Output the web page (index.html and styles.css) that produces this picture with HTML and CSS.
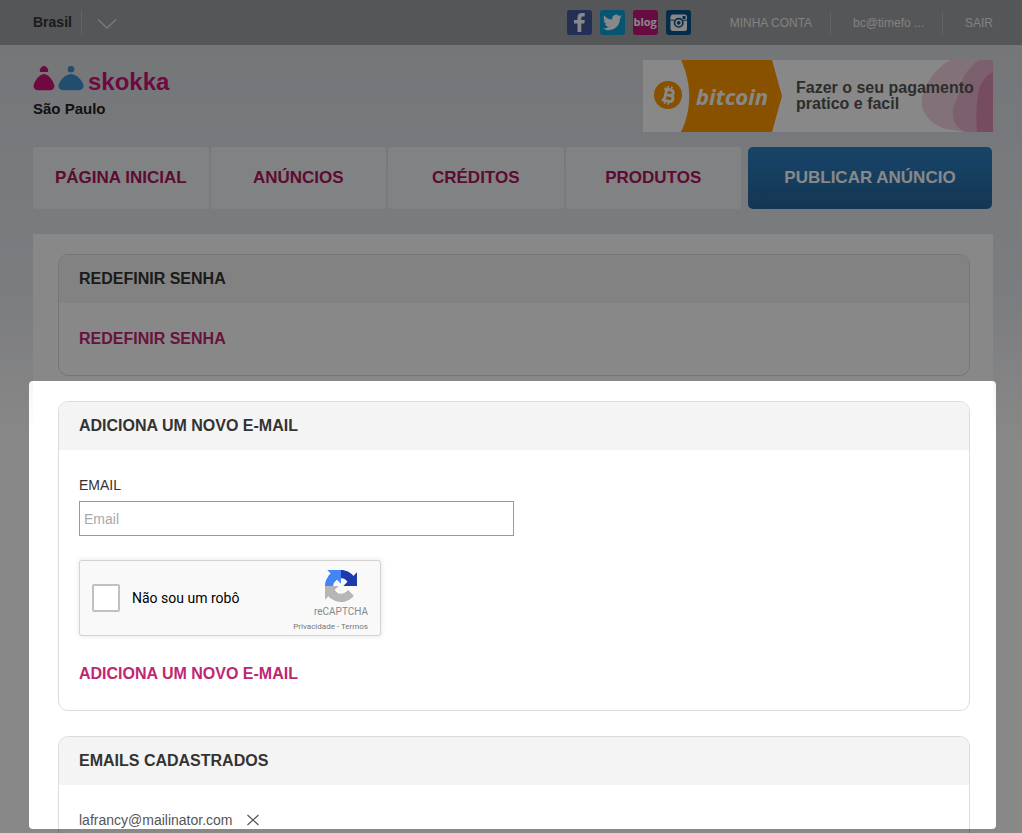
FILE: index.html
```html
<!DOCTYPE html>
<html lang="pt-BR">
<head>
<meta charset="utf-8">
<meta name="viewport" content="width=device-width, initial-scale=1">
<title>Skokka São Paulo</title>
<link rel="stylesheet" href="styles.css">
</head>
<body>
<div class="page">
  <header class="topbar">
    <div class="country">
      <span class="country-name">Brasil</span>
      <button class="country-toggle" type="button" aria-label="Escolher país">
        <svg width="20" height="12" viewBox="0 0 20 12"><path d="M1 1.500 10 10 19 1.500" fill="none" stroke="#e4e4e4" stroke-width="1.500"/></svg>
      </button>
    </div>
    <nav class="social" aria-label="Redes sociais">
      <a href="#" aria-label="Facebook"><svg width="25" height="25" viewBox="0 0 25 25"><rect width="25" height="25" rx="3" fill="#42599f"/><path d="M10.500 22v-8.500H7V10h3.500V7.500C10.500 4.400 12.200 3 15 3h2.700v3.500h-1.800c-1.300 0-1.600.5-1.600 1.600V10h3.500l-.5 3.500h-3V22z" fill="#fff"/></svg></a>
      <a href="#" aria-label="Twitter"><svg width="25" height="25" viewBox="0 0 25 25"><rect width="25" height="25" rx="3" fill="#0b9fd8"/><path d="M22 6.600c-.7.300-1.400.5-2.200.6.800-.5 1.400-1.200 1.700-2.100-.8.400-1.600.8-2.500.9a3.900 3.900 0 0 0-6.700 3.600C9 9.400 6.200 7.800 4.200 5.400c-1 1.800-.5 4.100 1.200 5.200-.6 0-1.200-.2-1.700-.5 0 1.900 1.300 3.500 3.100 3.900-.6.200-1.200.2-1.800.1.500 1.500 2 2.600 3.700 2.700A7.900 7.900 0 0 1 3 18.400c7.500 4.700 17-.6 17-9.800.8-.5 1.500-1.200 2-2z" fill="#fff"/></svg></a>
      <a class="blog" href="#">blog</a>
      <a href="#" aria-label="Instagram"><svg width="25" height="25" viewBox="0 0 25 25"><rect width="25" height="25" rx="3" fill="#0a5387"/><rect x="4.500" y="4.500" width="16.500" height="16.500" rx="2.500" fill="#fff"/><path d="M4.500 10.200h3.800M16.800 10.200H21" stroke="#0a5387"/><circle cx="12.700" cy="12.800" r="4.200" fill="#fff" stroke="#0a5387" stroke-width="1.600"/><circle cx="12.700" cy="12.800" r="1.900" fill="#0a5387"/><rect x="16.500" y="6" width="3" height="3" rx=".6" fill="#0a5387"/></svg></a>
    </nav>
    <nav class="account" aria-label="Conta">
      <a href="#">MINHA CONTA</a>
      <a href="#">bc@timefo ...</a>
      <a href="#">SAIR</a>
    </nav>
  </header>

  <div class="content">
    <div class="masthead">
      <div class="brand">
        <a class="logo" href="#">
          <svg width="51" height="26" viewBox="0 0 51 26" aria-hidden="true"><path d="M7 7C6 4.500 8.500 1 11 1s5 3.500 4 6zM11 9C6 9.500 2 15.500.7 20c-.8 3 1.200 5.200 4.500 5.200h11.600c3.300 0 5.300-2.200 4.500-5.200C20 15.500 16 9.500 11 9z" fill="#d3127b"/><circle cx="38" cy="4.200" r="3.300" fill="#3e92d0"/><path d="M38 9c-6 .6-10.500 5.700-12.300 10.500-1 3 .8 5.700 4.300 5.700h16c3.500 0 5.300-2.700 4.300-5.700C48.500 14.700 44 9.600 38 9z" fill="#3e92d0"/></svg>
          <span>skokka</span>
        </a>
        <p class="city">São Paulo</p>
      </div>
      <a class="banner" href="#">
        <svg width="350" height="72" viewBox="0 0 350 72">
          <rect width="350" height="72" fill="#fff"/>
          <path d="M308 0c-14 6-27 25-29 38-2 14 8 26 24 31l20 3h27V0z" fill="#f3d4e3"/>
          <path d="M336 0c-11 8-18 18-19 30-2 9-8 15-7 24 0 9 5 16 14 18h26V0z" fill="#e9b5cf"/>
          <path d="M350 12c-8 4-14 13-15 22-2 13-2 27-1 38h16z" fill="#de8fb7"/>
          <path d="M38 0h91l10 36-10 36H38c11-23 11-48 0-72z" fill="#ff9800"/>
          <circle cx="25" cy="35" r="14" fill="#ff9800"/>
          <g transform="rotate(13 25 35)" fill="none" stroke="#fff" stroke-width="2.800"><path d="M20 29.500h6.500c4.300 0 4.300 5.500 0 5.500H22h5c5 0 5 6 0 6h-7M22.500 29v12"/><path d="M23.500 26v3.500M27 26v3.500M23.500 41v3.500M27 41v3.500" stroke-width="1.700"/></g>
          <text class="bitcoin" x="53" y="45">bitcoin</text>
          <text class="slogan" x="153" y="33">Fazer o seu pagamento</text>
          <text class="slogan" x="153" y="49">pratico e facil</text>
        </svg>
      </a>
    </div>

    <nav class="menu" aria-label="Principal">
      <div class="tabs">
        <a href="#">PÁGINA INICIAL</a>
        <a href="#">ANÚNCIOS</a>
        <a href="#">CRÉDITOS</a>
        <a href="#">PRODUTOS</a>
      </div>
      <a class="publish" href="#">PUBLICAR ANÚNCIO</a>
    </nav>

    <main class="panel">
      <section class="card">
        <h2>REDEFINIR SENHA</h2>
        <div class="card-body"><a class="action" href="#">REDEFINIR SENHA</a></div>
      </section>
      <div class="highlight">
        <section class="card">
          <h2>ADICIONA UM NOVO E-MAIL</h2>
          <form class="card-body">
            <label class="field-label" for="email">EMAIL</label>
            <input class="field" id="email" type="email" placeholder="Email">
            <div class="captcha">
              <input id="robot" type="checkbox">
              <label for="robot">Não sou um robô</label>
              <div class="captcha-brand">
                <svg width="32" height="32" viewBox="0 0 64 64" aria-hidden="true"><path d="M64 31.955c-.002-.46-.012-.918-.033-1.373V4.687l-7.160 7.160C50.948 4.670 42.009.085 32.002.085c-10.414 0-19.666 4.966-25.505 12.655l11.736 11.860a15.550 15.550 0 0 1 4.754-5.336c2.050-1.600 4.953-2.908 8.996-2.908.488 0 .865.057 1.142.165 5.010.395 9.350 3.160 11.907 7.173l-8.307 8.307z" fill="#1c3aa9"/><path d="M31.862.094c-.459.002-.916.013-1.370.034H4.594l7.160 7.160C4.577 13.146 0 22.085 0 32.092c0 10.414 4.966 19.666 12.655 25.505l11.860-11.736a15.550 15.550 0 0 1-5.336-4.754c-1.600-2.050-2.908-4.953-2.908-8.996 0-.488.057-.865.165-1.142.395-5.010 3.160-9.350 7.173-11.907l8.307 8.307z" fill="#4285f4"/><path d="M.001 32.040c.002.459.013.916.034 1.370v25.898l7.160-7.160c5.868 7.176 14.800 11.760 24.807 11.760 10.414 0 19.666-4.966 25.505-12.655L45.771 39.393a15.550 15.550 0 0 1-4.754 5.336c-2.050 1.600-4.953 2.908-8.996 2.908-.488 0-.865-.057-1.142-.165-5.010-.395-9.350-3.160-11.907-7.173l8.307-8.307z" fill="#b6b6b6"/></svg>
                <span class="captcha-name">reCAPTCHA</span>
                <span class="captcha-links"><a href="#">Privacidade</a> - <a href="#">Termos</a></span>
              </div>
            </div>
            <button class="action" type="submit">ADICIONA UM NOVO E-MAIL</button>
          </form>
        </section>
        <section class="card">
          <h2>EMAILS CADASTRADOS</h2>
          <div class="card-body registered">
            <span>lafrancy@mailinator.com</span>
            <button type="button" aria-label="Remover"><svg width="12" height="12" viewBox="0 0 12 12"><path d="M.5 1 11.500 11M11.500 1 .5 11" stroke="#555" stroke-width="1.200"/></svg></button>
          </div>
        </section>
      </div>
    </main>
  </div>
</div>
</body>
</html>
```

FILE: styles.css
```css
* { box-sizing: border-box; }

body {
  margin: 0;
  font: 14px/20px "Liberation Sans", Arial, sans-serif;
  color: #333;
}

a { color: inherit; text-decoration: none; }

button {
  margin: 0;
  padding: 0;
  border: 0;
  background: none;
  font: inherit;
  cursor: pointer;
}

svg { display: block; }

h2, p { margin: 0; }

.page {
  height: 100vh;
  overflow: hidden;
  background: linear-gradient(#dadce0, #e8eaef 300px, #fff 440px);
}

.topbar {
  display: flex;
  align-items: center;
  height: 45px;
  padding: 0 29px 0 33px;
  background: #9fa1a3;
}

.country { display: flex; align-items: center; }

.country-name {
  padding-right: 9px;
  border-right: 1px solid #b6b8ba;
  font-weight: bold;
  line-height: 25px;
}

.country-toggle { padding: 2px 15px 0; }

.social { display: flex; gap: 8px; margin-left: auto; }

.blog {
  width: 25px;
  height: 25px;
  border-radius: 3px;
  background: #c4157c;
  color: #fff;
  font: bold 11px/23px "Open Sans", sans-serif;
  text-align: center;
}

.account {
  display: flex;
  margin-left: 22px;
  color: #f2f2f2;
  font-size: 12px;
  line-height: 24px;
}

.account a { padding: 0 18px 0 17px; }
.account a + a { padding-left: 22px; border-left: 1px solid #b6b8ba; }
.account a:last-child { padding-right: 0; }

.content { padding: 0 29px 0 33px; }

.masthead {
  display: flex;
  justify-content: space-between;
  padding-top: 15px;
}

.brand { padding-top: 5px; }

.logo {
  display: flex;
  gap: 4px;
  height: 34px;
  color: #cc1478;
  font-size: 24px;
  font-weight: bold;
  line-height: 34px;
}

.city { font-size: 15px; font-weight: bold; color: #222; }

.bitcoin { font: italic bold 22px "Open Sans", sans-serif; fill: #fff; }
.slogan { font: bold 16px "Liberation Sans", Arial, sans-serif; fill: #555; }

.menu {
  display: flex;
  gap: 7px;
  margin-top: 15px;
  padding-right: 1px;
  font-size: 17px;
  font-weight: bold;
  line-height: 62px;
  text-align: center;
}

.tabs {
  display: grid;
  grid-template-columns: repeat(4, 1fr);
  gap: 2px;
  flex: 1;
  color: #b0135f;
}

.tabs a { height: 62px; border-radius: 3px; background: #f2f4f5; }

.publish {
  width: 244px;
  height: 62px;
  border-radius: 5px;
  background: linear-gradient(#2c80c4, #27679d);
  color: #fff;
}

.panel { margin-top: 25px; padding: 20px 23px 0 25px; background: #fff; }

.card {
  border: 1px solid #dcdcdc;
  border-radius: 10px;
  overflow: hidden;
  background: #fff;
}

.card h2 {
  padding: 0 20px;
  background: #f4f4f4;
  color: #333;
  font-size: 16px;
  line-height: 48px;
}

.card-body { padding: 25px 20px; }

.action {
  display: block;
  color: #c02672;
  font-size: 16px;
  font-weight: bold;
  line-height: 22px;
}

/* Everything outside the highlighted block is dimmed. */
.highlight { position: relative; margin-top: 25px; }

.highlight::after {
  content: "";
  position: absolute;
  inset: -20px -26px 4px -29px;
  border-radius: 4px;
  box-shadow: 0 0 0 2000px rgba(0, 0, 0, 0.467);
  pointer-events: none;
}

.highlight .card + .card {
  margin-top: 25px;
  border-bottom: 0;
  border-radius: 10px 10px 0 0;
}

.field-label { display: block; }

.field {
  display: block;
  width: 435px;
  max-width: 100%;
  height: 35px;
  margin-top: 6px;
  padding: 0 4px;
  border: 1px solid #999;
  background: #fff;
  font: inherit;
}

.field::placeholder { color: #aaa; }

.captcha {
  display: flex;
  align-items: center;
  width: 302px;
  height: 76px;
  margin: 24px 0 27px;
  padding: 0 12px;
  border: 1px solid #d3d3d3;
  border-radius: 3px;
  background: #f9f9f9;
  box-shadow: 0 0 4px 1px rgba(0, 0, 0, 0.08);
  color: #000;
  font-family: Roboto, sans-serif;
}

.captcha input {
  appearance: none;
  width: 28px;
  height: 28px;
  margin: 0 12px 0 0;
  border: 2px solid #c1c1c1;
  border-radius: 2px;
  background: #fff;
}

.captcha-brand {
  display: flex;
  flex-direction: column;
  align-items: flex-end;
  margin-left: auto;
  padding-top: 9px;
  color: #777;
}

.captcha-brand svg { margin-right: 11px; }
.captcha-name { padding-top: 3px; font-size: 10px; line-height: 14px; color: #888; }
.captcha-links { font-size: 8px; line-height: 16px; }

.registered {
  display: flex;
  align-items: center;
  gap: 14px;
  padding-bottom: 3px;
  color: #555;
}
```
